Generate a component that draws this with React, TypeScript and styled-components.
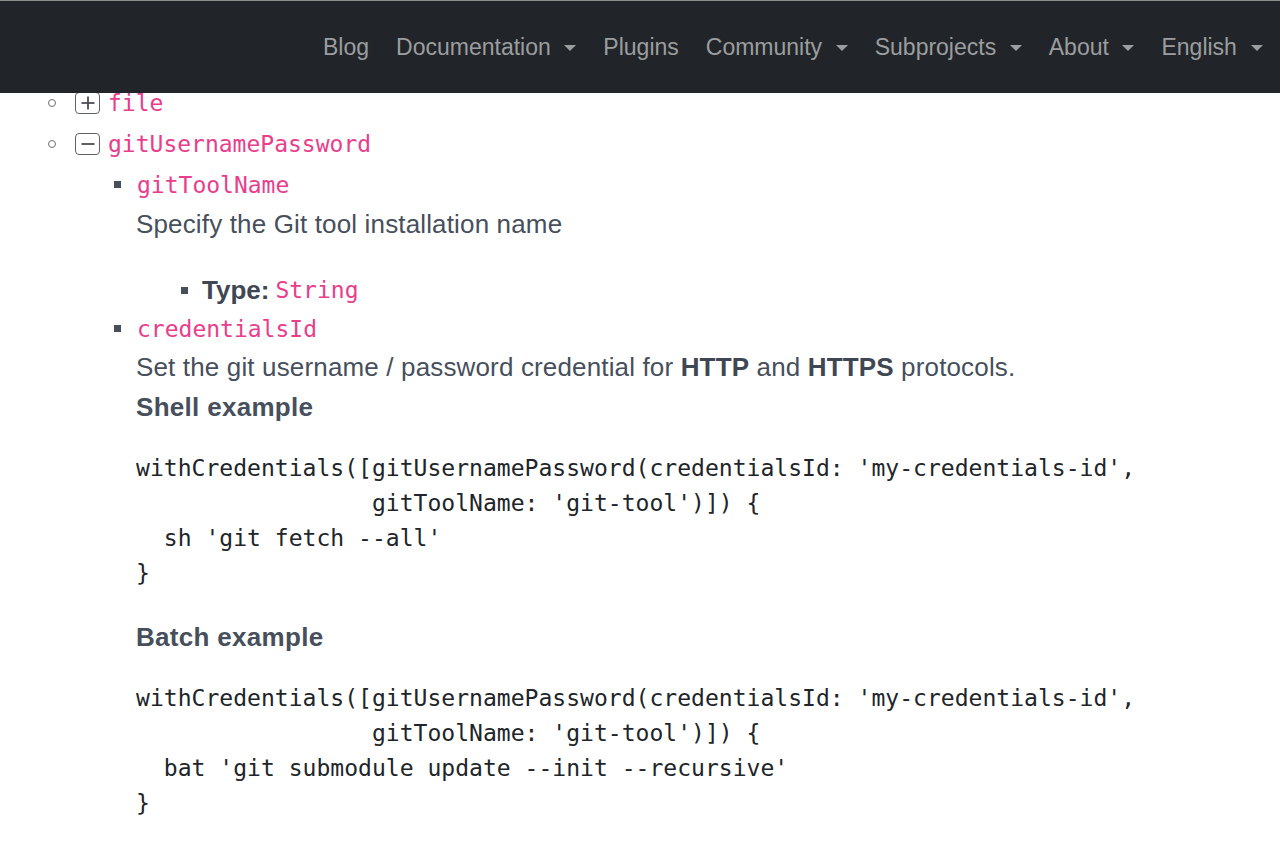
import React from 'react';
import styled, { createGlobalStyle } from 'styled-components';

const GlobalStyle = createGlobalStyle`
    html, body {
        margin: 0;
        padding: 0;
        background: #fff;
    }
    body {
        font-family: "Liberation Sans", Arial, sans-serif;
        color: #474f5c;
    }
`;

const NavBar = styled.nav`
    position: fixed;
    top: 0;
    left: 0;
    right: 0;
    height: 93px;
    box-sizing: border-box;
    background: #212529;
    border-top: 1px solid #8c8c8c;
    display: flex;
    align-items: center;
    justify-content: flex-end;
    padding-right: 4px;
    z-index: 10;
`;

const NavLink = styled.a`
    display: flex;
    align-items: center;
    padding: 0 13.5px;
    font-size: 23px;
    color: #9c9d9f;
    text-decoration: none;
    white-space: nowrap;
`;

const Caret = styled.span`
    display: inline-block;
    margin-left: 13.6px;
    width: 0;
    height: 0;
    border-left: 6.5px solid transparent;
    border-right: 6.5px solid transparent;
    border-top: 6.5px solid #9c9d9f;
    margin-top: 1px;
`;

const Content = styled.main`
    padding: 82px 0 40px 40px;
`;

const List = styled.ul`
    list-style: none;
    margin: 0;
    padding: 0;
`;

const Item = styled.li<{ $indent: number }>`
    padding-left: ${(p) => p.$indent}px;
`;

const Row = styled.div<{ $height: number }>`
    display: flex;
    align-items: center;
    height: ${(p) => p.$height}px;
`;

const BulletCell = styled.span<{ $width: number; $gap: number }>`
    flex: none;
    width: ${(p) => p.$width}px;
    margin-right: ${(p) => p.$gap}px;
    display: flex;
    align-items: center;
    justify-content: center;
`;

const CircleBullet = styled.span`
    box-sizing: border-box;
    width: 8px;
    height: 8px;
    border: 1.3px solid #6b6f75;
    border-radius: 50%;
`;

const SquareBullet = styled.span`
    width: 7px;
    height: 7px;
    background: #474f5c;
`;

const Toggle = styled.span`
    flex: none;
    box-sizing: border-box;
    width: 25px;
    height: 22px;
    margin-right: 8px;
    border: 1.6px solid #5f6368;
    border-radius: 4px;
    display: flex;
    align-items: center;
    justify-content: center;
`;

const Code = styled.code`
    font-family: "DejaVu Sans Mono", Menlo, monospace;
    font-size: 23px;
    color: #e83e8c;
`;

const Paragraph = styled.p<{ $height: number; $bottom?: number }>`
    margin: 0 0 ${(p) => p.$bottom || 0}px;
    font-size: 26px;
    letter-spacing: 0.15px;
    line-height: ${(p) => p.$height}px;
    color: #474f5c;
`;

const Strong = styled.strong`
    font-weight: 700;
    color: #3f4753;
`;

const Detail = styled.div`
    margin-left: 30px;
`;

const Heading = styled.h4<{ $top: number }>`
    margin: ${(p) => p.$top}px 0 0;
    font-size: 26px;
    letter-spacing: 0.3px;
    line-height: 40px;
    font-weight: 700;
    color: #474f5c;
`;

const Pre = styled.pre<{ $top: number }>`
    margin: ${(p) => p.$top}px 0 0;
    font-family: "DejaVu Sans Mono", Menlo, monospace;
    font-size: 23.05px;
    line-height: 35px;
    color: #212529;
`;

const TypeLabel = styled.span`
    font-size: 26px;
    font-weight: 700;
    color: #3f4753;
    margin-right: 6px;
`;

const ToggleIcon = ({ minus }: { minus?: boolean }) => (
    <svg width="16" height="16" viewBox="0 0 16 16">
        <line x1="1.5" y1="8" x2="14.5" y2="8" stroke="#4a4e54" strokeWidth="1.8" />
        {!minus && <line x1="8" y1="1.5" x2="8" y2="14.5" stroke="#4a4e54" strokeWidth="1.8" />}
    </svg>
);

const navItems = [
    { label: 'Blog' },
    { label: 'Documentation', dropdown: true },
    { label: 'Plugins' },
    { label: 'Community', dropdown: true },
    { label: 'Subprojects', dropdown: true },
    { label: 'About', dropdown: true },
    { label: 'English', dropdown: true },
];

const shellCode = `withCredentials([gitUsernamePassword(credentialsId: 'my-credentials-id',
                 gitToolName: 'git-tool')]) {
  sh 'git fetch --all'
}`;

const batchCode = `withCredentials([gitUsernamePassword(credentialsId: 'my-credentials-id',
                 gitToolName: 'git-tool')]) {
  bat 'git submodule update --init --recursive'
}`;

const App = () => {
    return (
        <>
            <GlobalStyle />
            <NavBar>
                {navItems.map((item) => (
                    <NavLink key={item.label} href="#">
                        {item.label}
                        {item.dropdown && <Caret />}
                    </NavLink>
                ))}
            </NavBar>
            <Content>
                <List>
                    <Item $indent={0}>
                        <Row $height={41}>
                            <BulletCell $width={24} $gap={11}><CircleBullet /></BulletCell>
                            <Toggle><ToggleIcon /></Toggle>
                            <Code>file</Code>
                        </Row>
                    </Item>
                    <Item $indent={0}>
                        <Row $height={41}>
                            <BulletCell $width={24} $gap={11}><CircleBullet /></BulletCell>
                            <Toggle><ToggleIcon minus /></Toggle>
                            <Code>gitUsernamePassword</Code>
                        </Row>
                        <List>
                            <Item $indent={66}>
                                <Row $height={41}>
                                    <BulletCell $width={22} $gap={9}><SquareBullet /></BulletCell>
                                    <Code>gitToolName</Code>
                                </Row>
                                <Detail>
                                    <Paragraph $height={38} $bottom={28}>
                                        Specify the Git tool installation name
                                    </Paragraph>
                                </Detail>
                                <List>
                                    <Item $indent={72}>
                                        <Row $height={38}>
                                            <BulletCell $width={12} $gap={12}><SquareBullet /></BulletCell>
                                            <TypeLabel>Type:</TypeLabel>
                                            <Code>String</Code>
                                        </Row>
                                    </Item>
                                </List>
                            </Item>
                            <Item $indent={66}>
                                <Row $height={39}>
                                    <BulletCell $width={22} $gap={9}><SquareBullet /></BulletCell>
                                    <Code>credentialsId</Code>
                                </Row>
                                <Detail>
                                    <Paragraph $height={39}>
                                        Set the git username / password credential for <Strong>HTTP</Strong> and{' '}
                                        <Strong>HTTPS</Strong> protocols.
                                    </Paragraph>
                                    <Heading $top={0}>Shell example</Heading>
                                    <Pre $top={24}>{shellCode}</Pre>
                                    <Heading $top={26}>Batch example</Heading>
                                    <Pre $top={24}>{batchCode}</Pre>
                                </Detail>
                            </Item>
                        </List>
                    </Item>
                </List>
            </Content>
        </>
    );
};

export default App;
